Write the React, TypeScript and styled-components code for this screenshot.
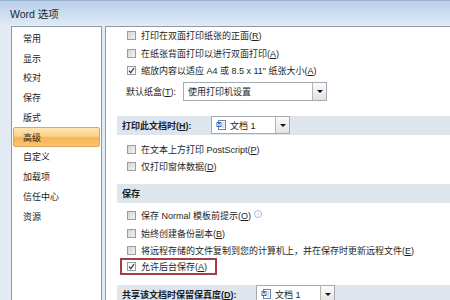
import React from "react";
import styled, { createGlobalStyle } from "styled-components";

const FONT = '"Liberation Sans", "Noto Sans CJK SC", sans-serif';

const Global = createGlobalStyle`
  html, body { margin: 0; padding: 0; }
  body {
    width: 450px;
    height: 300px;
    overflow: hidden;
    font-family: ${FONT};
    background: #e3ebf5;
  }
`;

const Window = styled.div`
  width: 450px;
  height: 300px;
  display: flex;
  flex-direction: column;
  background: #e2eaf4;
  overflow: hidden;
`;

const TitleBar = styled.div`
  height: 24px;
  flex: none;
  box-sizing: border-box;
  display: flex;
  align-items: center;
  padding: 2px 0 0 10px;
  font-size: 10.5px;
  color: #1d2836;
  border-top: 1px solid #9db4d1;
  background: linear-gradient(#b9cfe9, #cddff2 60%, #dde8f5);
`;

const Body = styled.div`
  flex: 1;
  min-height: 0;
  display: flex;
  gap: 3px;
  padding: 2px 0 0 11px;
`;

const Nav = styled.div`
  width: 91px;
  flex: none;
  box-sizing: border-box;
  background: #fff;
  border: 1px solid #8e9aaa;
  border-bottom: none;
  padding: 1.5px 1px 0 1px;
  display: flex;
  flex-direction: column;
`;

const NavItem = styled.div<{ $active?: boolean }>`
  height: 19.75px;
  box-sizing: border-box;
  display: flex;
  align-items: center;
  padding-left: 9px;
  font-size: 9px;
  color: #222;
  border-radius: 2px;
  border: 1px solid ${(p) => (p.$active ? "#e3a55c" : "transparent")};
  background: ${(p) =>
    p.$active
      ? "linear-gradient(#fde7b6, #fbd08a 45%, #f8b356 55%, #f9c56e)"
      : "transparent"};
`;

const Content = styled.div`
  flex: 1;
  min-width: 0;
  background: #fff;
  border: 1px solid #8e9aaa;
  border-right: none;
  border-bottom: none;
  display: flex;
  flex-direction: column;
  overflow: hidden;
`;

const Row = styled.div<{ $mt?: number }>`
  height: 17.5px;
  flex: none;
  display: flex;
  align-items: center;
  gap: 5px;
  padding-left: 21px;
  margin-top: ${(p) => p.$mt ?? 0}px;
  font-size: 9px;
  color: #1e1e1e;
  white-space: nowrap;
`;

const Highlight = styled.div`
  align-self: flex-start;
  height: 20px;
  box-sizing: border-box;
  margin: -1.5px 0 0 14px;
  padding: 0 8px 0 5px;
  border: 2px solid #a53d42;
  display: flex;
  align-items: center;
  gap: 5px;
  font-size: 9px;
  color: #1e1e1e;
  white-space: nowrap;
`;

const Box = styled.span<{ $checked?: boolean }>`
  width: 9px;
  height: 9px;
  flex: none;
  box-sizing: border-box;
  border: 1px solid #9c9c9c;
  background: ${(p) =>
    p.$checked ? "linear-gradient(135deg, #f2f2f2, #ffffff)" : "linear-gradient(135deg, #d4d4d4, #f3f3f3)"};
  display: flex;
  align-items: center;
  justify-content: center;
`;

const FieldRow = styled.div`
  height: 20px;
  flex: none;
  display: flex;
  align-items: center;
  margin-top: 2px;
  padding-left: 20px;
  font-size: 9px;
  color: #1e1e1e;
`;

const FieldLabel = styled.span<{ $w: number }>`
  width: ${(p) => p.$w}px;
  flex: none;
  white-space: nowrap;
`;

const Band = styled.div<{ $mt: number }>`
  height: 19px;
  flex: none;
  margin: ${(p) => p.$mt}px 0 0 11px;
  padding-left: 5px;
  display: flex;
  align-items: center;
  background: #dfe5ed;
  font-size: 9px;
  font-weight: bold;
  color: #1c1c1c;
  white-space: nowrap;
`;

const Select = styled.div<{ $w: number; $h: number }>`
  width: ${(p) => p.$w}px;
  height: ${(p) => p.$h}px;
  flex: none;
  box-sizing: border-box;
  border: 1px solid #a3aab4;
  background: #fff;
  display: flex;
  align-items: stretch;
  font-weight: normal;
  font-size: 9px;
  color: #1e1e1e;
`;

const SelectText = styled.span`
  flex: 1;
  display: flex;
  align-items: center;
  gap: 4px;
  padding-left: 4px;
  white-space: nowrap;
`;

const DropButton = styled.span`
  width: 13px;
  flex: none;
  border-left: 1px solid #b4b4b4;
  background: linear-gradient(#fbfbfb, #e2e2e2);
  display: flex;
  align-items: center;
  justify-content: center;
  &::after {
    content: "";
    border-left: 3px solid transparent;
    border-right: 3px solid transparent;
    border-top: 3px solid #111;
  }
`;

const Info = styled.span`
  width: 6px;
  height: 6px;
  margin-left: -2px;
  margin-top: -4px;
  border: 1px solid #a9b8cc;
  border-radius: 50%;
  font-size: 5px;
  line-height: 6px;
  text-align: center;
  color: #8aa0bd;
  font-family: "Liberation Serif", serif;
`;

const Key = styled.span`
  text-decoration: underline;
`;

const Check = () => (
  <svg width="7" height="7" viewBox="0 0 7 7">
    <path d="M1 3.6 L2.8 5.6 L6 1" fill="none" stroke="#27426b" strokeWidth="1.3" />
  </svg>
);

const DocIcon = () => (
  <svg width="10" height="10" viewBox="0 0 10 10">
    <rect x="2.5" y="0.5" width="7" height="9" fill="#fff" stroke="#6b86aa" />
    <rect x="0.5" y="2" width="5" height="5" fill="#3c6fb3" />
    <path d="M1.3 3 L2 6 L3 4 L4 6 L4.7 3" fill="none" stroke="#fff" strokeWidth="0.7" />
    <path d="M6 3 H8.5 M6 5 H8.5 M6 7 H8.5" stroke="#8aa2c2" strokeWidth="0.6" />
  </svg>
);

const navItems = ["常用", "显示", "校对", "保存", "版式", "高级", "自定义", "加载项", "信任中心", "资源"];

const Option = ({ checked, mt, children }: { checked?: boolean; mt?: number; children: React.ReactNode }) => (
  <Row $mt={mt}>
    <Box $checked={checked}>{checked && <Check />}</Box>
    <span>{children}</span>
  </Row>
);

export default function App() {
  return (
    <>
      <Global />
      <Window>
        <TitleBar>Word 选项</TitleBar>
        <Body>
          <Nav>
            {navItems.map((n) => (
              <NavItem key={n} $active={n === "高级"}>
                {n}
              </NavItem>
            ))}
          </Nav>
          <Content>
            <Option>
              打印在双面打印纸张的正面(<Key>R</Key>)
            </Option>
            <Option>
              在纸张背面打印以进行双面打印(<Key>A</Key>)
            </Option>
            <Option checked>
              缩放内容以适应 A4 或 8.5 x 11" 纸张大小(<Key>A</Key>)
            </Option>
            <FieldRow>
              <FieldLabel $w={57}>
                默认纸盒(<Key>T</Key>):
              </FieldLabel>
              <Select $w={144} $h={19}>
                <SelectText>使用打印机设置</SelectText>
                <DropButton />
              </Select>
            </FieldRow>
            <Band $mt={14}>
              <FieldLabel $w={89}>
                打印此文档时(<Key>H</Key>):
              </FieldLabel>
              <Select $w={79} $h={18}>
                <SelectText>
                  <DocIcon />
                  文档 1
                </SelectText>
                <DropButton />
              </Select>
            </Band>
            <Option mt={6}>
              在文本上方打印 PostScript(<Key>P</Key>)
            </Option>
            <Option>
              仅打印窗体数据(<Key>D</Key>)
            </Option>
            <Band $mt={8.5}>保存</Band>
            <Row $mt={4}>
              <Box />
              <span>
                保存 Normal 模板前提示(<Key>O</Key>)
              </span>
              <Info>i</Info>
            </Row>
            <Option>
              始终创建备份副本(<Key>B</Key>)
            </Option>
            <Option>
              将远程存储的文件复制到您的计算机上，并在保存时更新远程文件(<Key>E</Key>)
            </Option>
            <Highlight>
              <Box $checked>
                <Check />
              </Box>
              <span>
                允许后台保存(<Key>A</Key>)
              </span>
            </Highlight>
            <Band $mt={9.5}>
              <FieldLabel $w={134}>
                共享该文档时保留保真度(<Key>D</Key>):
              </FieldLabel>
              <Select $w={79} $h={18}>
                <SelectText>
                  <DocIcon />
                  文档 1
                </SelectText>
                <DropButton />
              </Select>
            </Band>
          </Content>
        </Body>
      </Window>
    </>
  );
}
